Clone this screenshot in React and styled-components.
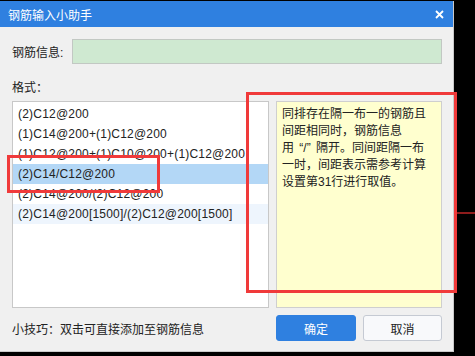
import styled, { createGlobalStyle } from "styled-components";

const GlobalStyle = createGlobalStyle`
    body {
        margin: 0;
        background: #000000;
        font-family: "Liberation Sans", "Noto Sans CJK SC", sans-serif;
    }
`

const Screen = styled.div`
    position: relative;
    width: 475px;
    height: 356px;
    padding-top: 1px;
    box-sizing: border-box;
    background: #000000;
    overflow: hidden;
`

const Dialog = styled.div`
    width: 454px;
    height: 351px;
    background: #f0f0f0;
    border-right: 1px solid #c9c9c9;
    border-bottom: 1px solid #c9c9c9;
    box-sizing: border-box;
    display: flex;
    flex-direction: column;
`

const TitleBar = styled.div`
    height: 26px;
    background: #2f80e0;
    color: #ffffff;
    font-size: 12px;
    display: flex;
    align-items: center;
    justify-content: space-between;
    padding: 0 9px 0 8px;
    flex-shrink: 0;
`

const Body = styled.div`
    flex: 1;
    display: flex;
    flex-direction: column;
    padding: 12px 11px 0 12px;
`

const InfoRow = styled.div`
    display: flex;
    align-items: center;
    gap: 9px;
    font-size: 12px;
    color: #222222;
`

const InfoInput = styled.div`
    flex: 1;
    height: 25px;
    box-sizing: border-box;
    background: #cfe9d1;
    border: 1px solid #c2c8c3;
`

const Label = styled.div`
    font-size: 12px;
    color: #222222;
    margin: 17px 0 5px;
    line-height: 15px;
`

const Content = styled.div`
    display: flex;
    gap: 7px;
    height: 207px;
`

const List = styled.div`
    width: 257px;
    box-sizing: border-box;
    background: #ffffff;
    border: 1px solid #c8c8c8;
    padding-top: 2px;
    overflow: hidden;
`

const Row = styled.div`
    height: 20px;
    line-height: 20px;
    padding-left: 5px;
    font-size: 12px;
    letter-spacing: 0.2px;
    color: #222222;
    white-space: nowrap;
    background: ${p => p.$selected ? "#b3d7f6" : p.$hover ? "#eef5fd" : "transparent"};
`

const Note = styled.div`
    flex: 1;
    box-sizing: border-box;
    background: #ffffcf;
    border: 1px solid #cfcfcf;
    padding: 4px 5px;
    font-size: 12px;
    line-height: 17px;
    color: #222222;
    white-space: nowrap;
`

const Quote = styled.span`
    margin: 0 2px;
`

const Footer = styled.div`
    display: flex;
    align-items: center;
    margin-top: 7px;
    gap: 7px;
`

const Tip = styled.div`
    flex: 1;
    font-size: 12px;
    color: #222222;
`

const Button = styled.div`
    width: ${p => p.$w}px;
    height: 26px;
    box-sizing: border-box;
    border-radius: 3px;
    display: flex;
    align-items: center;
    justify-content: center;
    font-size: 12px;
    background: ${p => p.$primary ? "#2f80e0" : "#f8f9fb"};
    color: ${p => p.$primary ? "#ffffff" : "#222222"};
    border: 1px solid ${p => p.$primary ? "#2f80e0" : "#c5cad3"};
`

const Mark = styled.div`
    position: absolute;
    left: ${p => p.$x}px;
    top: ${p => p.$y}px;
    width: ${p => p.$w}px;
    height: ${p => p.$h}px;
    box-sizing: border-box;
    border: 3px solid #f03a3a;
    pointer-events: none;
`

const BackLine = styled.div`
    position: absolute;
    left: 455px;
    top: 212px;
    width: 20px;
    height: 2px;
    background: #8e1c1c;
`

const formatos = [
    "(2)C12@200",
    "(1)C14@200+(1)C12@200",
    "(1)C12@200+(1)C10@200+(1)C12@200",
    "(2)C14/C12@200",
    "(2)C14@200/(2)C12@200",
    "(2)C14@200[1500]/(2)C12@200[1500]",
];

const CloseIcon = () => (
    <svg width="9" height="9" viewBox="0 0 9 9">
        <path d="M1 1L8 8M8 1L1 8" stroke="#ffffff" strokeWidth="1.8" />
    </svg>
)

const App = () => {
    return (
        <Screen>
            <GlobalStyle />
            <BackLine />
            <Dialog>
                <TitleBar>
                    <span>钢筋输入小助手</span>
                    <CloseIcon />
                </TitleBar>
                <Body>
                    <InfoRow>
                        <span>钢筋信息:</span>
                        <InfoInput />
                    </InfoRow>
                    <Label>格式：</Label>
                    <Content>
                        <List>
                            {formatos.map((f, i) => (
                                <Row key={f} $selected={i === 3} $hover={i === 5}>{f}</Row>
                            ))}
                        </List>
                        <Note>
                            同排存在隔一布一的钢筋且<br />
                            间距相同时，钢筋信息<br />
                            用 <Quote>“/”</Quote> 隔开。同间距隔一布<br />
                            一时，间距表示需参考计算<br />
                            设置第31行进行取值。
                        </Note>
                    </Content>
                    <Footer>
                        <Tip>小技巧：双击可直接添加至钢筋信息</Tip>
                        <Button $primary $w={80}>确定</Button>
                        <Button $w={79}>取消</Button>
                    </Footer>
                </Body>
            </Dialog>
            <Mark $x={246} $y={92} $w={211} $h={201} />
            <Mark $x={7} $y={155} $w={153} $h={38} />
        </Screen>
    )
}

export default App;
